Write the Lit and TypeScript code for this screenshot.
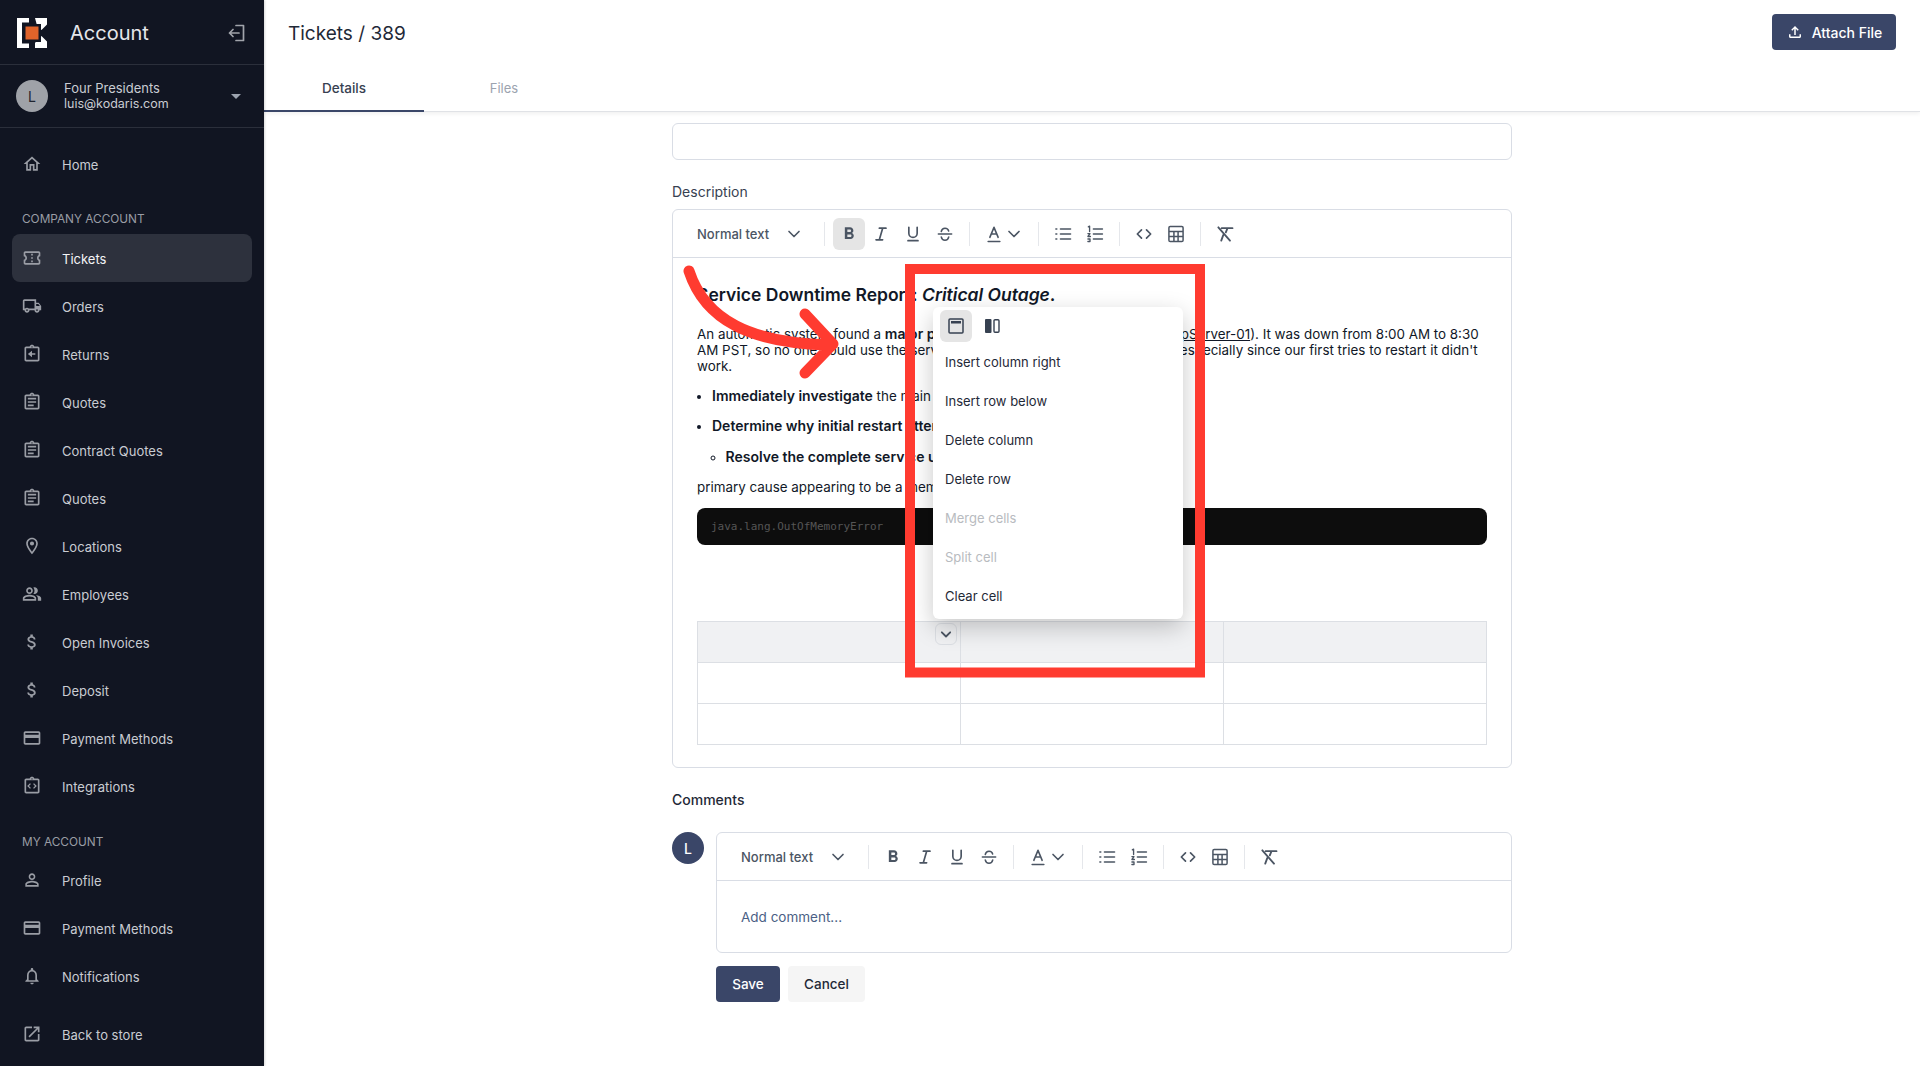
import { LitElement, html, css, svg } from "lit";
import { customElement, property } from "lit/decorators.js";

const P: Record<string, string> = {
  home: "M12 5.69l5 4.5V18h-2v-6H9v6H7v-7.81l5-4.5M12 3L2 12h3v8h6v-6h2v6h6v-8h3L12 3z",
  truck: "M20 8h-3V4H3c-1.1 0-2 .9-2 2v11h2c0 1.66 1.34 3 3 3s3-1.34 3-3h6c0 1.66 1.34 3 3 3s3-1.34 3-3h2v-5l-3-4zm-.5 1.5l1.96 2.5H17V9.5h2.5zM6 18c-.55 0-1-.45-1-1s.45-1 1-1 1 .45 1 1-.45 1-1 1zm2.22-3c-.55-.61-1.33-1-2.22-1s-1.67.39-2.22 1H3V6h12v9H8.22zM18 18c-.55 0-1-.45-1-1s.45-1 1-1 1 .45 1 1-.45 1-1 1z",
  clip: "M19 3h-4.18C14.4 1.84 13.3 1 12 1s-2.4.84-2.82 2H5c-1.1 0-2 .9-2 2v14c0 1.1.9 2 2 2h14c1.1 0 2-.9 2-2V5c0-1.1-.9-2-2-2zm-7-.25c.41 0 .75.34.75.75s-.34.75-.75.75-.75-.34-.75-.75.34-.75.75-.75zM19 19H5V5h14v14zM7 15h7v2H7zM7 11h10v2H7zM7 7h10v2H7z",
  ret: "M19 3h-4.18C14.4 1.84 13.3 1 12 1s-2.4.84-2.82 2H5c-1.1 0-2 .9-2 2v14c0 1.1.9 2 2 2h14c1.1 0 2-.9 2-2V5c0-1.1-.9-2-2-2zm-7-.25c.41 0 .75.34.75.75s-.34.75-.75.75-.75-.34-.75-.75.34-.75.75-.75zM19 19H5V5h14v14zM16 11h-4V8l-5 4 5 4v-3h4z",
  code: "M19 3h-4.18C14.4 1.84 13.3 1 12 1s-2.4.84-2.82 2H5c-1.1 0-2 .9-2 2v14c0 1.1.9 2 2 2h14c1.1 0 2-.9 2-2V5c0-1.1-.9-2-2-2zm-7-.25c.41 0 .75.34.75.75s-.34.75-.75.75-.75-.34-.75-.75.34-.75.75-.75zM19 19H5V5h14v14zM9.6 15.4L6.2 12l3.4-3.4 1.1 1.1L8.4 12l2.3 2.3zM14.4 15.4l-1.1-1.1 2.3-2.3-2.3-2.3 1.1-1.1 3.4 3.4z",
  pin: "M12 2C8.13 2 5 5.13 5 9c0 5.25 7 13 7 13s7-7.75 7-13c0-3.87-3.13-7-7-7zM7 9c0-2.76 2.24-5 5-5s5 2.24 5 5c0 2.88-2.88 7.19-5 9.88C9.92 16.21 7 11.85 7 9zM12 6.5a2.5 2.5 0 100 5 2.5 2.5 0 000-5z",
  people: "M16.67 13.13C18.04 14.06 19 15.32 19 17v3h4v-3c0-2.18-3.57-3.47-6.33-3.87zM15 12c2.21 0 4-1.79 4-4s-1.79-4-4-4c-.47 0-.91.1-1.33.24C14.5 5.27 15 6.58 15 8s-.5 2.73-1.33 3.76c.42.14.86.24 1.33.24zM9 12c2.21 0 4-1.79 4-4s-1.79-4-4-4-4 1.79-4 4 1.79 4 4 4zm0-6c1.1 0 2 .9 2 2s-.9 2-2 2-2-.9-2-2 .9-2 2-2zM9 13c-2.67 0-8 1.34-8 4v3h16v-3c0-2.66-5.33-4-8-4zm6 5H3v-.99C3.2 16.29 6.3 15 9 15s5.8 1.29 6 2v1z",
  money: "M11.8 10.9c-2.27-.59-3-1.2-3-2.15 0-1.09 1.01-1.85 2.7-1.85 1.78 0 2.44.85 2.5 2.1h2.21c-.07-1.72-1.12-3.3-3.21-3.81V3h-3v2.16c-1.94.42-3.5 1.68-3.5 3.61 0 2.31 1.91 3.46 4.7 4.13 2.5.6 3 1.48 3 2.41 0 .69-.49 1.79-2.7 1.79-2.06 0-2.87-.92-2.98-2.1h-2.2c.12 2.19 1.76 3.42 3.68 3.83V21h3v-2.15c1.95-.37 3.5-1.5 3.5-3.55 0-2.84-2.43-3.81-4.7-4.4z",
  card: "M20 4H4c-1.11 0-1.99.89-1.99 2L2 18c0 1.11.89 2 2 2h16c1.11 0 2-.89 2-2V6c0-1.11-.89-2-2-2zm0 14H4v-6h16v6zm0-10H4V6h16v2z",
  person: "M12 5.9c1.16 0 2.1.94 2.1 2.1s-.94 2.1-2.1 2.1S9.9 9.16 9.9 8s.94-2.1 2.1-2.1m0 9c2.97 0 6.1 1.46 6.1 2.1v1.1H5.9V17c0-.64 3.13-2.1 6.1-2.1M12 4C9.79 4 8 5.79 8 8s1.79 4 4 4 4-1.79 4-4-1.79-4-4-4zm0 9c-2.67 0-8 1.34-8 4v3h16v-3c0-2.66-5.33-4-8-4z",
  bell: "M12 22c1.1 0 2-.9 2-2h-4c0 1.1.9 2 2 2zm6-6v-5c0-3.07-1.63-5.64-4.5-6.32V4c0-.83-.67-1.5-1.5-1.5s-1.5.67-1.5 1.5v.68C7.64 5.36 6 7.92 6 11v5l-2 2v1h16v-1l-2-2zm-2 1H8v-6c0-2.48 1.51-4.5 4-4.5s4 2.02 4 4.5v6z",
  open: "M19 19H5V5h7V3H5c-1.11 0-2 .9-2 2v14c0 1.1.89 2 2 2h14c1.1 0 2-.9 2-2v-7h-2v7zM14 3v2h3.59l-9.83 9.83 1.41 1.41L19 6.41V10h2V3h-7z",
  ticket: "M22 10V6c0-1.11-.9-2-2-2H4c-1.1 0-1.99.89-1.99 2v4c1.1 0 1.99.9 1.99 2s-.89 2-2 2v4c0 1.1.9 2 2 2h16c1.1 0 2-.9 2-2v-4c-1.1 0-2-.9-2-2s.9-2 2-2zm-2-1.46c-1.19.69-2 1.99-2 3.46s.81 2.77 2 3.46V18H4v-2.54c1.19-.69 2-1.99 2-3.46 0-1.48-.8-2.77-1.99-3.46L4 6h16v2.54zM11 15h2v2h-2zM11 11h2v2h-2zM11 7h2v2h-2z",
  upload: "M18 15v3H6v-3H4v3c0 1.1.9 2 2 2h12c1.1 0 2-.9 2-2v-3h-2zM7 9l1.41 1.41L11 7.83V16h2V7.83l2.59 2.58L17 9l-5-5-5 5z",
  bold: "M15.6 10.79c.97-.67 1.65-1.77 1.65-2.79 0-2.26-1.75-4-4-4H7v14h7.04c2.09 0 3.71-1.7 3.71-3.79 0-1.52-.86-2.82-2.15-3.42zM10 6.5h3c.83 0 1.5.67 1.5 1.5s-.67 1.5-1.5 1.5h-3v-3zm3.5 9H10v-3h3.5c.83 0 1.5.67 1.5 1.5s-.67 1.5-1.5 1.5z",
};

const fillIcon = (n: string, size = 20, color = "currentColor") => html`<svg width=${size} height=${size} viewBox="0 0 24 24" fill=${color}><path d=${P[n]}></path></svg>`;
const line = (d: string, sw = 1.8) => html`<svg width="20" height="20" viewBox="0 0 24 24" fill="none" stroke="#4b5563" stroke-width=${sw} stroke-linecap="round" stroke-linejoin="round">${svg`<path d=${d}></path>`}</svg>`;

@customElement("rich-toolbar")
class RichToolbar extends LitElement {
  @property({ type: Boolean }) active = false;
  static styles = css`
    :host { display: flex; align-items: center; height: 48px; padding-left: 24px; box-sizing: border-box; border-bottom: 1px solid #d9dde5; }
    .select { display: flex; align-items: center; justify-content: space-between; width: 119px; font-size: 13px; font-weight: 500; color: #4b5563; white-space: nowrap; }
    .select svg { margin-right: 12px; }
    .div { width: 1px; height: 24px; background: #e5e7eb; margin: 0 8px; flex: none; }
    .btn { width: 32px; height: 32px; display: flex; align-items: center; justify-content: center; border-radius: 6px; flex: none; }
    .btn.on { background: #e5e5e5; }
    .color { display: flex; align-items: center; width: 52px; padding-left: 6px; box-sizing: border-box; flex: none; }
  `;
  render() {
    const chev = line("M6 9l6 6 6-6", 2);
    return html`
      <div class="select">Normal text ${chev}</div>
      <span class="div"></span>
      <span class="btn ${this.active ? "on" : ""}">${fillIcon("bold", 20, "#4b5563")}</span>
      <span class="btn">${line("M10 5h8M6 19h8M14 5l-4 14", 2)}</span>
      <span class="btn">${line("M7 4v7a5 5 0 0010 0V4M6 20h12", 2)}</span>
      <span class="btn">${line("M4 12h16M7.5 9C8 6.5 9.8 5 12 5s4 1.2 4.4 3.5M7.5 15.5C8 18 10 19.5 12 19.5s4-1.3 4.5-4", 1.8)}</span>
      <span class="div"></span>
      <span class="color">${line("M5 21h14M7 16l5-12 5 12M9 12h6", 1.9)}${line("M6 9l6 6 6-6", 2)}</span>
      <span class="div"></span>
      <span class="btn">${line("M9 6h12M9 12h12M9 18h12M3.5 6h1M3.5 12h1M3.5 18h1", 2)}</span>
      <span class="btn">${line("M10 6h11M10 12h11M10 18h11M4 3.5l1.5-1V9M3.5 11.500h2.5l-2.5 3.500h3M3.5 18h2.500M3.500 21h2.500M6 18v3", 1.6)}</span>
      <span class="div"></span>
      <span class="btn">${line("M9 7l-5 5 5 5M15 7l5 5-5 5", 2)}</span>
      <span class="btn">${line("M5 3h14a1.5 1.5 0 011.5 1.5v15A1.5 1.5 0 0119 21H5a1.5 1.5 0 01-1.5-1.5v-15A1.5 1.5 0 015 3zM3.5 9h17M3.5 15h17M9.5 9v12M14.5 9v12", 1.8)}</span>
      <span class="div"></span>
      <span class="btn">${line("M8 5h13M15 5l-2 5M4 4l14 16M10 13l-2.5 7", 2.2)}</span>
    `;
  }
}

const company: [string, string, boolean?][] = [
  ["ticket", "Tickets", true], ["truck", "Orders"], ["ret", "Returns"], ["clip", "Quotes"],
  ["clip", "Contract Quotes"], ["clip", "Quotes"], ["pin", "Locations"], ["people", "Employees"],
  ["money", "Open Invoices"], ["money", "Deposit"], ["card", "Payment Methods"], ["code", "Integrations"],
];
const mine: [string, string][] = [["person", "Profile"], ["card", "Payment Methods"], ["bell", "Notifications"]];

@customElement("app-root")
class AppRoot extends LitElement {
  static styles = css`
    :host { display: block; position: relative; width: 1920px; height: 1066px; overflow: hidden; background: #fff; font-family: Inter, "Liberation Sans", sans-serif; color: #111827; }
    .shell { display: flex; height: 1066px; }
    .side { width: 264px; flex: none; background: #111522; color: #d1d5db; box-shadow: 1px 0 2px rgba(0,0,0,.15); position: relative; z-index: 2; }
    .brand { height: 65px; box-sizing: border-box; display: flex; align-items: center; padding: 1px 18px 0 17px; border-bottom: 1px solid #2b2f3b; }
    .brand .name { font-size: 20px; color: #e5e7eb; margin-left: 23px; flex: 1; }
    .acct { height: 63px; box-sizing: border-box; display: flex; align-items: center; padding: 0 23px 0 16px; border-bottom: 1px solid #2b2f3b; }
    .ava { width: 32px; height: 32px; border-radius: 50%; background: #9fa2a8; color: #1f2430; display: flex; align-items: center; justify-content: center; font-size: 14px; flex: none; }
    .who { margin-left: 16px; flex: 1; font-size: 13px; line-height: 15px; color: #c9ccd2; }
    .who small { font-size: 12.5px; }
    .caret { width: 0; height: 0; border-left: 5px solid transparent; border-right: 5px solid transparent; border-top: 5px solid #9ca3af; }
    .nav { padding-top: 12px; }
    .item { height: 48px; margin: 0 12px; padding-left: 10px; display: flex; align-items: center; gap: 20px; font-size: 13px; border-radius: 8px; color: #c9ccd2; }
    .item svg { color: #9a9da5; flex: none; }
    .item span { padding-top: 2px; }
    .item.on { background: #2d313d; color: #f3f4f6; }
    .sec { padding: 23px 22px 7px; font-size: 11.8px; line-height: 16px; color: #9a9da5; }
    .sec.two { padding: 24px 22px 6px; }
    .back { margin-top: 10px; }
    .main { flex: 1; min-width: 0; display: flex; flex-direction: column; }
    .top { height: 112px; box-sizing: border-box; border-bottom: 1px solid #e0e2e6; box-shadow: 0 2px 4px rgba(0,0,0,.06); flex: none; }
    .row { height: 64px; display: flex; align-items: center; justify-content: space-between; padding: 2px 24px 0; box-sizing: border-box; }
    .title { font-size: 19px; color: #1f2937; }
    .attach { height: 36px; width: 124px; margin-top: -2px; background: #3a4668; color: #fff; border-radius: 4px; display: flex; align-items: center; justify-content: center; gap: 8px; font-size: 14px; font-weight: 500; }
    .tabs { display: flex; height: 48px; }
    .tab { width: 160px; display: flex; align-items: center; justify-content: center; font-size: 13px; color: #9ca3af; box-sizing: border-box; }
    .tab.on { color: #374151; font-weight: 500; box-shadow: inset 0 -2px 0 #3a4668; font-size: 13.5px; }
    .form { width: 840px; margin: 11px auto 0; }
    .input { height: 37px; border: 1px solid #d9dde5; border-radius: 6px; box-sizing: border-box; }
    .label { margin-top: 23px; height: 18px; line-height: 18px; font-size: 14px; color: #374151; margin-bottom: 8px; }
    .editor { border: 1px solid #d9dde5; border-radius: 6px; height: 559px; box-sizing: border-box; }
    .content { padding: 24px; font-size: 13.4px; line-height: 16px; color: #111827; }
    h2 { font-size: 17.5px; line-height: 26px; font-weight: 600; margin: 0 0 18px; white-space: nowrap; }
    p { margin: 0; white-space: nowrap; }
    b { font-weight: 600; font-size: 14px; }
    u { text-underline-offset: 1px; }
    ul { margin: 14px 0 0; padding: 0 0 0 15px; }
    ul ul { margin-top: 14.5px; list-style: circle; padding-left: 13.5px; }
    li + li { margin-top: 14px; }
    .after { margin-top: 14.5px; }
    pre { margin: 13px 0 0; height: 37px; background: #0d0d0d; border-radius: 8px; color: #555; font: 11px/37px "DejaVu Sans Mono", monospace; padding-left: 14px; }
    table { margin-top: 76px; width: 790px; border-collapse: collapse; table-layout: fixed; }
    td { border: 1px solid #dcdfe4; height: 41px; padding: 0; box-sizing: border-box; }
    tr:first-child td { background: #f0f1f3; }
    .chead { margin-top: 23px; height: 18px; line-height: 18px; font-size: 14px; font-weight: 500; color: #1f2937; }
    .cwrap { display: flex; gap: 12px; margin-top: 23px; }
    .lava { width: 32px; height: 32px; border-radius: 50%; background: #3a4668; color: #fff; display: flex; align-items: center; justify-content: center; font-size: 14px; font-weight: 500; flex: none; }
    .cbody { flex: 1; min-width: 0; }
    .cbox { border: 1px solid #d9dde5; border-radius: 6px; height: 121px; box-sizing: border-box; }
    .ph { padding: 28px 24px; font-size: 13.5px; line-height: 16px; color: #4b5f85; }
    .acts { display: flex; gap: 8px; margin-top: 13px; }
    .save, .cancel { height: 36px; border-radius: 4px; display: flex; align-items: center; justify-content: center; font-size: 13.5px; font-weight: 500; }
    .save { width: 64px; background: #3a4668; color: #fff; }
    .cancel { width: 77px; background: #f5f5f5; color: #1f2937; }
    .popup { position: absolute; left: 933px; top: 307px; width: 250px; height: 312px; box-sizing: border-box; background: #fff; border-radius: 6px; box-shadow: 0 8px 24px rgba(0,0,0,.22); padding: 3px 0 0; z-index: 3; }
    .ptabs { display: flex; padding-left: 7px; height: 32px; }
    .ptab { width: 32px; height: 32px; border-radius: 6px; display: flex; align-items: center; justify-content: center; margin-right: 4px; }
    .ptab.on { background: #e5e5e5; }
    .mi { height: 39px; display: flex; align-items: center; padding-left: 12px; font-size: 13px; color: #1f2937; }
    .mi.off { color: #b8bbc0; }
    .chevbtn { position: absolute; left: 935px; top: 623px; width: 22px; height: 22px; box-sizing: border-box; border: 1px solid #dcdfe4; border-radius: 6px; background: #f0f1f3; display: flex; align-items: center; justify-content: center; z-index: 2; }
    .mark { position: absolute; inset: 0; z-index: 4; pointer-events: none; }
  `;

  renderNav(i: [string, string, boolean?], cls = "") {
    return html`<div class="item ${i[2] ? "on" : ""} ${cls}">${fillIcon(i[0])}<span>${i[1]}</span></div>`;
  }

  render() {
    const items = ["Insert column right", "Insert row below", "Delete column", "Delete row", "Merge cells", "Split cell", "Clear cell"];
    return html`
      <div class="shell">
        <aside class="side">
          <div class="brand">
            <svg width="30" height="30" viewBox="0 0 30 30">
              <path fill="#fff" d="M0 0h12v4.5H5v21h7V30H0z"></path>
              <path fill="#fff" d="M18 0h12v6.5L24.5 12 20 7.5zM20 22.5l4.5-4.500 5.500 5.500V30H18v-5z"></path>
              <rect x="6" y="6" width="18" height="18" fill="#111522"></rect>
              <rect x="8.5" y="8.5" width="13" height="13" fill="#e0632a"></rect>
              <path fill="#fff" d="M24 12.500l6-6V5l-2-1-4 4z" opacity="0"></path>
            </svg>
            <span class="name">Account</span>
            <svg width="18" height="18" viewBox="0 0 18 18" fill="none" stroke="#a1a4ab" stroke-width="1.7" stroke-linecap="round" stroke-linejoin="round"><path d="M8 1.500h7.500v15H8M11 9H1.500M5 5.500L1.500 9 5 12.500"></path></svg>
          </div>
          <div class="acct">
            <div class="ava">L</div>
            <div class="who">Four Presidents<br /><small>luis@kodaris.com</small></div>
            <div class="caret"></div>
          </div>
          <div class="nav">
            ${this.renderNav(["home", "Home"])}
            <div class="sec">COMPANY ACCOUNT</div>
            ${company.map((i) => this.renderNav(i))}
            <div class="sec two">MY ACCOUNT</div>
            ${mine.map((i) => this.renderNav(i))}
            ${this.renderNav(["open", "Back to store"], "back")}
          </div>
        </aside>
        <main class="main">
          <div class="top">
            <div class="row">
              <div class="title">Tickets / 389</div>
              <div class="attach">${fillIcon("upload", 18)}Attach File</div>
            </div>
            <div class="tabs"><div class="tab on">Details</div><div class="tab">Files</div></div>
          </div>
          <div class="form">
            <div class="input"></div>
            <div class="label">Description</div>
            <div class="editor">
              <rich-toolbar active></rich-toolbar>
              <div class="content">
                <h2>Service Downtime Report: <em>Critical Outage</em>.</h2>
                <p>An automatic system found a <b>major problem</b> with our application server (<u>AppServer-01</u>). It was down from 8:00 AM to 8:30<br />AM PST, so no one could use the service. This needs attention immediately, especially since our first tries to restart it didn't<br />work.</p>
                <ul>
                  <li><b>Immediately investigate</b> the main cause</li>
                  <li><b>Determine why initial restart attempts failed</b>
                    <ul><li><b>Resolve the complete service unavailability</b></li></ul>
                  </li>
                </ul>
                <p class="after">primary cause appearing to be a memory error.</p>
                <pre>java.lang.OutOfMemoryError</pre>
                <table>
                  <tr><td></td><td></td><td></td></tr>
                  <tr><td></td><td></td><td></td></tr>
                  <tr><td></td><td></td><td></td></tr>
                </table>
              </div>
            </div>
            <div class="chead">Comments</div>
            <div class="cwrap">
              <div class="lava">L</div>
              <div class="cbody">
                <div class="cbox">
                  <rich-toolbar></rich-toolbar>
                  <div class="ph">Add comment...</div>
                </div>
                <div class="acts"><div class="save">Save</div><div class="cancel">Cancel</div></div>
              </div>
            </div>
          </div>
        </main>
      </div>

      <div class="chevbtn">${line("M7 10l5 5 5-5", 2.2)}</div>
      <div class="popup">
        <div class="ptabs">
          <span class="ptab on"><svg width="18" height="18" viewBox="0 0 18 18" fill="none"><rect x="2" y="2" width="14" height="14" rx="1" stroke="#374151" stroke-width="1.5"></rect><rect x="4" y="4" width="10" height="2.5" fill="#374151"></rect></svg></span>
          <span class="ptab"><svg width="18" height="18" viewBox="0 0 18 18" fill="none"><rect x="2" y="2" width="6.5" height="14" rx="1" fill="#374151"></rect><rect x="11" y="2.7" width="5" height="12.6" rx="1" stroke="#374151" stroke-width="1.4"></rect></svg></span>
        </div>
        ${items.map((t) => html`<div class="mi ${t === "Merge cells" || t === "Split cell" ? "off" : ""}">${t}</div>`)}
      </div>

      <svg class="mark" width="1920" height="1066" viewBox="0 0 1920 1066" fill="none">
        <rect x="910" y="269" width="290" height="403.5" stroke="#ff3b30" stroke-width="10"></rect>
        <path d="M689 271C705 320 750 343 830 345M805 314L833 344L805 373" stroke="#ff3b30" stroke-width="11" stroke-linecap="round" stroke-linejoin="round"></path>
      </svg>
    `;
  }
}
